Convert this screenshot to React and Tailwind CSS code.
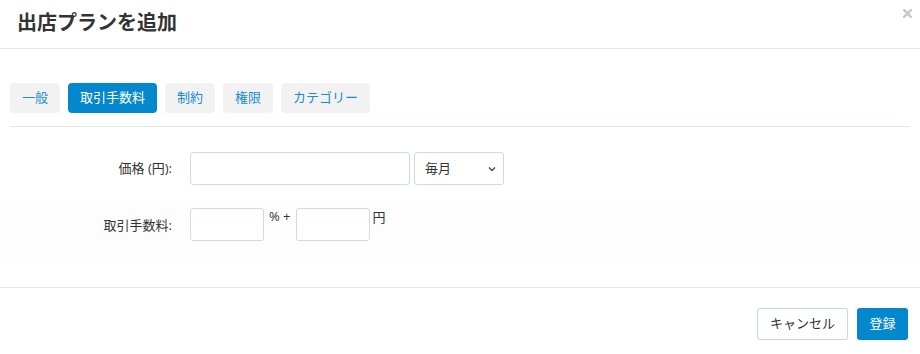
import React from "react";

const font = { fontFamily: '"Open Sans", "Noto Sans CJK JP", sans-serif' };

export default function App() {
  const tabs = ["一般", "取引手数料", "制約", "権限", "カテゴリー"];
  return (
    <div className="relative w-[920px] h-[354px] bg-white text-[#333]" style={font}>
      <div className="h-[49px] flex items-center pl-[17px] border-b border-[#e5e5e5]">
        <h1 className="text-[20px] font-bold leading-none text-[#333] mt-[-2px]">出店プランを追加</h1>
      </div>
      <button className="absolute top-[9px] left-[903px] w-[9px] h-[9px]" aria-label="close">
        <svg width="9" height="9" viewBox="0 0 9 9" className="block">
          <path d="M1.2 1.2 L7.8 7.8 M7.8 1.2 L1.2 7.8" stroke="#c8c8c8" strokeWidth="2.4" strokeLinecap="square" />
        </svg>
      </button>

      <div className="pt-[34px] px-[10px]">
        <div className="flex gap-[8px]">
          {tabs.map((t, i) => (
            <div
              key={t}
              className={
                i === 1
                  ? "h-[30px] px-[12px] flex items-center rounded-[4px] bg-[#0488cd] text-white text-[13px]"
                  : "h-[30px] px-[12px] flex items-center rounded-[4px] bg-[#f2f2f2] text-[#1a8ad0] text-[13px]"
              }
            >
              {t}
            </div>
          ))}
        </div>
        <div className="mt-[13px] border-b border-[#e1e7ef]" />
      </div>

      <div className="pt-[25px]">
        <div className="flex items-center">
          <label className="w-[172px] text-right text-[13px] text-[#333]">価格 (円):</label>
          <input className="ml-[18px] w-[220px] h-[33px] border border-[#d2d9e2] rounded-[3px]" />
          <div className="ml-[4px] w-[90px] h-[33px] border border-[#d2d9e2] rounded-[3px] flex items-center justify-between pl-[10px] pr-[6px] text-[13px] text-[#333]">
            <span>毎月</span>
            <svg width="10" height="10" viewBox="0 0 10 10" fill="none" stroke="#444" strokeWidth="1.3">
              <path d="M2 3.5 L5 6.5 L8 3.5" />
            </svg>
          </div>
        </div>
        <div className="mt-[15px] pt-[8px] h-[64px] bg-[#fdfdfd] flex items-start">
          <label className="w-[172px] text-right text-[13px] text-[#333] mt-[8px]">取引手数料:</label>
          <input className="ml-[18px] w-[74px] h-[33px] border border-[#d2d9e2] rounded-[3px] bg-white" />
          <span className="ml-[5px] text-[13px] leading-none mt-[2px] text-[#333]">% +</span>
          <input className="ml-[5px] w-[74px] h-[33px] border border-[#d2d9e2] rounded-[3px] bg-white" />
          <span className="ml-[3px] text-[13px] leading-none mt-[3px] text-[#333]">円</span>
        </div>
      </div>

      <div className="mt-[23px] border-t border-[#e5e5e5] flex justify-end gap-[9px] pt-[20px] pr-[12px]">
        <button className="h-[32px] w-[91px] border border-[#ccd4dd] rounded-[3px] bg-white text-[13px] text-[#333]">キャンセル</button>
        <button className="h-[32px] w-[51px] rounded-[3px] bg-[#0488cd] text-[13px] text-white">登録</button>
      </div>
    </div>
  );
}
